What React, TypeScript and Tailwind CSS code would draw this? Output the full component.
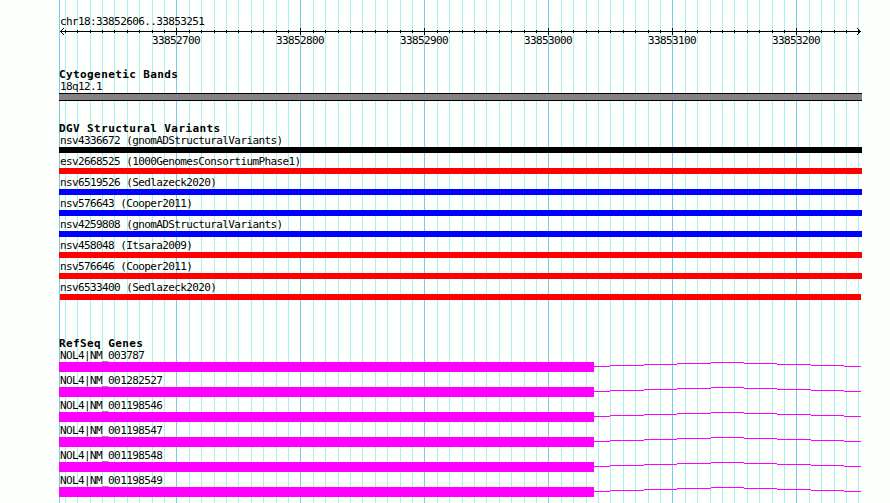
import type { ReactNode } from "react";

type Variant = { id: string; study: string; color: string; inset?: boolean };

const variants: Variant[] = [
  { id: "nsv4336672", study: "gnomADStructuralVariants", color: "bg-black" },
  { id: "esv2668525", study: "1000GenomesConsortiumPhase1", color: "bg-[#ff0000]" },
  { id: "nsv6519526", study: "Sedlazeck2020", color: "bg-[#0000ff]" },
  { id: "nsv576643", study: "Cooper2011", color: "bg-[#0000ff]" },
  { id: "nsv4259808", study: "gnomADStructuralVariants", color: "bg-[#0000ff]" },
  { id: "nsv458048", study: "Itsara2009", color: "bg-[#ff0000]" },
  { id: "nsv576646", study: "Cooper2011", color: "bg-[#ff0000]" },
  { id: "nsv6533400", study: "Sedlazeck2020", color: "bg-[#ff0000]", inset: true },
];

const genes = ["NM_003787", "NM_001282527", "NM_001198546", "NM_001198547", "NM_001198548", "NM_001198549"];

const axisLabels = [33852700, 33852800, 33852900, 33853000, 33853100, 33853200];

// one grid line every 10 bp, major every 100 bp
const gridLines = Array.from({ length: 65 }, (_, k) => ({ x: Math.floor(65.3 + 12.4 * k), major: k % 10 === 9 }));

// [x, y, width] of each intron step, relative to the gene bar
const intronSteps = [
  [594, 4, 16], [610, 3, 34], [644, 2, 33], [677, 1, 34], [711, 0, 33],
  [744, 1, 33], [777, 2, 34], [811, 3, 33], [844, 4, 17],
];

function Grid() {
  return (
    <svg className="absolute inset-0" width="890" height="503" shapeRendering="crispEdges">
      <rect x="59" y="0" width="1" height="503" fill="#7ecaea" />
      {gridLines.map((l) => <rect key={l.x} x={l.x} y="0" width="1" height="503" fill={l.major ? "#7ecaea" : "#aeeeee"} />)}
    </svg>
  );
}

function Axis() {
  return (
    <svg className="mt-px block" width="890" height="7" shapeRendering="crispEdges">
      <rect x="60" y="3" width="801" height="1" />
      {gridLines.map((l) => <rect key={l.x} x={l.x} y={l.major ? 0 : 2} width="1" height={l.major ? 7 : 3} />)}
      {[0, 1, 2, 3].map((i) => (
        <g key={i}>
          <rect x={60 + i} y={3 - i} width="1" height="1" />
          <rect x={60 + i} y={3 + i} width="1" height="1" />
          <rect x={860 - i} y={3 - i} width="1" height="1" />
          <rect x={860 - i} y={3 + i} width="1" height="1" />
        </g>
      ))}
    </svg>
  );
}

function Heading({ children }: { children: ReactNode }) {
  return <h2 className="h-3 pl-[59px] font-bold tracking-[0.4px]">{children}</h2>;
}

function Label({ children }: { children: ReactNode }) {
  return <p className="h-3 pl-[60px]">{children}</p>;
}

export default function App() {
  return (
    <div className="relative h-[503px] w-[890px] overflow-hidden bg-[#fdfffc] font-['DejaVu_Sans_Mono',monospace] text-[11px] leading-[14px] tracking-[-0.61px] whitespace-pre text-black">
      <Grid />
      <main className="relative pt-[15px]">
        <Label>chr18:33852606..33853251</Label>
        <Axis />
        <div className="-mt-px flex h-3 pl-[152px]">
          {axisLabels.map((n) => <span key={n} className="w-[124px] shrink-0">{n}</span>)}
        </div>

        <section className="mt-[22px]">
          <Heading>Cytogenetic Bands</Heading>
          <Label>18q12.1</Label>
          <div className="mt-px ml-[59px] h-2 w-[803px] border-y border-black bg-[#858184]" />
        </section>

        <section className="mt-[21px]">
          <Heading>DGV Structural Variants</Heading>
          <div className="flex flex-col gap-0.5">
            {variants.map((v) => (
              <div key={v.id}>
                <Label>{`${v.id} (${v.study})`}</Label>
                <div className={`mt-px h-1.5 ${v.color} ${v.inset ? "ml-[60px] w-[801px]" : "ml-[59px] w-[803px]"}`} />
              </div>
            ))}
          </div>
        </section>

        <section className="mt-[37px]">
          <Heading>RefSeq Genes</Heading>
          <div className="flex flex-col gap-0.5">
            {genes.map((g) => (
              <div key={g}>
                <Label>{`NOL4|${g}`}</Label>
                <svg className="mt-px block" width="890" height="10" shapeRendering="crispEdges" fill="#ff00ff">
                  <rect x="59" y="0" width="535" height="10" />
                  {intronSteps.map(([x, y, w]) => <rect key={x} x={x} y={y} width={w} height="1" />)}
                </svg>
              </div>
            ))}
          </div>
        </section>
      </main>
    </div>
  );
}
